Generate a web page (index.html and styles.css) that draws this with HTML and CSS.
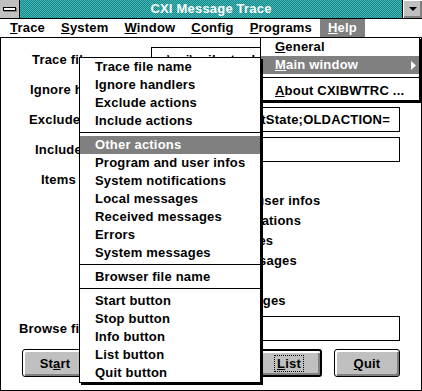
FILE: index.html
```html
<!DOCTYPE html>
<html>
    <head>
        <title>CXI Message Trace</title>
        <link rel="stylesheet" href="styles.css">
    </head>
    <body>
        <div class="window">
            <div class="titlebar">
                <div class="sysbox"><span class="sysbar"></span></div>
                <div class="title">CXI Message Trace</div>
                <div class="minbtn"><span class="arrow"></span></div>
            </div>

            <div class="menubar">
                <span class="menu"><u>T</u>race</span>
                <span class="menu"><u>S</u>ystem</span>
                <span class="menu"><u>W</u>indow</span>
                <span class="menu"><u>C</u>onfig</span>
                <span class="menu"><u>P</u>rograms</span>
                <span class="menu active"><u>H</u>elp</span>
            </div>

            <div class="client">
                <div class="fields">
                    <label class="lbl lbl-trace">Trace file name:</label>
                    <div class="edit">c:\cxi\cxibwtrc.log</div>

                    <label class="lbl lbl-ignore">Ignore handlers:</label>
                    <div class="edit"></div>

                    <label class="lbl lbl-exclude">Exclude actions:</label>
                    <div class="edit">Start;GetMsg;GetState;OLDACTION=</div>

                    <label class="lbl lbl-include">Include actions:</label>
                    <div class="edit"></div>

                    <label class="lbl lbl-items">Items</label>
                    <div class="checks">
                        <div class="check"><span class="box"></span>Other actions</div>
                        <div class="check"><span class="box"></span>Program and user infos</div>
                        <div class="check"><span class="box"></span>System notifications</div>
                        <div class="check"><span class="box"></span>Local messages</div>
                        <div class="check"><span class="box"></span>Received messages</div>
                        <div class="check"><span class="box"></span>Errors</div>
                        <div class="check"><span class="box"></span>System messages</div>
                    </div>

                    <label class="lbl lbl-browse">Browse file name:</label>
                    <div class="edit"></div>
                </div>

                <div class="buttons">
                    <button class="btn">St<u>a</u>rt</button>
                    <button class="btn">St<u>o</u>p</button>
                    <button class="btn"><u>I</u>nfo</button>
                    <button class="btn default"><span class="focus"><u>L</u>ist</span></button>
                    <button class="btn"><u>Q</u>uit</button>
                </div>
            </div>

            <!-- open Help menu -->
            <div class="dropdown help">
                <div class="item"><u>G</u>eneral</div>
                <div class="item sel"><u>M</u>ain window
                    <svg class="more" width="5" height="9" viewBox="0 0 5 9"><polygon points="0,0 5,4.5 0,9" fill="#fff"/></svg>
                </div>
                <div class="sep"></div>
                <div class="item"><u>A</u>bout CXIBWTRC ...</div>
            </div>

            <!-- Main window submenu -->
            <div class="dropdown sub">
                <div class="item">Trace file name</div>
                <div class="item">Ignore handlers</div>
                <div class="item">Exclude actions</div>
                <div class="item">Include actions</div>
                <div class="sep"></div>
                <div class="item sel">Other actions</div>
                <div class="item">Program and user infos</div>
                <div class="item">System notifications</div>
                <div class="item">Local messages</div>
                <div class="item">Received messages</div>
                <div class="item">Errors</div>
                <div class="item">System messages</div>
                <div class="sep"></div>
                <div class="item">Browser file name</div>
                <div class="sep"></div>
                <div class="item">Start button</div>
                <div class="item">Stop button</div>
                <div class="item">Info button</div>
                <div class="item">List button</div>
                <div class="item">Quit button</div>
            </div>
        </div>
    </body>
</html>
```

FILE: styles.css
```css
        body {
            margin: 0;
            background: #fff;
        }
        .window {
            position: relative;
            width: 422px;
            height: 391px;
            overflow: hidden;
            background: #fff;
            color: #000;
            font: bold 13px "Liberation Sans", Arial, sans-serif;
            letter-spacing: .2px;
        }

        /* title bar */
        .titlebar {
            display: flex;
            height: 18px;
            border-bottom: 1px solid #000;
        }
        .sysbox {
            width: 19px;
            border-right: 1px solid #000;
            background: #c0c0c0;
            display: flex;
            align-items: center;
            justify-content: center;
        }
        .sysbar {
            width: 11px;
            height: 2px;
            border: 1px solid #000;
            background: #fff;
            box-shadow: 1px 1px 0 #808080;
        }
        .title {
            flex: 1;
            color: #fff;
            text-align: center;
            line-height: 18px;
            background: repeating-conic-gradient(#0a8a8a 0 25%, #52b5b5 0 50%) 0 0 / 2px 2px;
        }
        .minbtn {
            width: 19px;
            border-left: 1px solid #000;
            background: #c0c0c0;
            box-shadow: inset 1px 1px 0 #fff, inset -2px -2px 0 #808080;
            display: flex;
            align-items: center;
            justify-content: center;
        }
        .arrow {
            border-left: 4px solid transparent;
            border-right: 4px solid transparent;
            border-top: 4px solid #000;
        }

        /* menu bar */
        .menubar {
            display: flex;
            height: 18px;
            padding-left: 2px;
            border-bottom: 1px solid #000;
        }
        .menu {
            padding: 0 8px;
            line-height: 18px;
        }
        .menu.active {
            background: #808080;
            color: #fff;
        }

        /* dialog body */
        .client {
            height: 353px;
            box-sizing: border-box;
            border: 1px solid #000;
            border-top: none;
        }
        .fields {
            display: grid;
            grid-template-columns: 150px 249px;
            row-gap: 5px;
            padding-top: 9px;
        }
        .lbl {
            line-height: 25px;
            white-space: nowrap;
        }
        .lbl-trace { padding-left: 31px; }
        .lbl-ignore { padding-left: 29px; }
        .lbl-exclude { padding-left: 28px; }
        .lbl-include { padding-left: 34px; }
        .lbl-items {
            padding-left: 40px;
            padding-top: 3px;
            line-height: 20px;
        }
        .lbl-browse { padding-left: 18px; }
        .edit {
            height: 25px;
            box-sizing: border-box;
            border: 1px solid #000;
            padding: 0 3px;
            line-height: 23px;
            white-space: nowrap;
            overflow: hidden;
        }
        .checks {
            padding: 3px 0 1px 2px;
        }
        .check {
            display: flex;
            align-items: center;
            gap: 5px;
            height: 20px;
            white-space: nowrap;
        }
        .box {
            width: 12px;
            height: 12px;
            box-sizing: border-box;
            border: 1px solid #000;
        }
        .buttons {
            display: flex;
            gap: 12px;
            padding: 8px 0 0 21px;
        }
        .btn {
            width: 66px;
            height: 28px;
            box-sizing: border-box;
            border: 1px solid #000;
            border-radius: 3px;
            background: #c0c0c0;
            box-shadow: inset 1px 1px 0 #fff, inset 2px 2px 0 #fff, inset -2px -2px 0 #808080;
            font: inherit;
            letter-spacing: inherit;
            color: #000;
            padding: 0;
        }
        .btn.default {
            border-width: 2px;
        }
        .focus {
            outline: 1px dotted #000;
            padding: 0 2px;
        }

        /* menus */
        .dropdown {
            position: absolute;
            box-sizing: border-box;
            border: 1px solid #000;
            box-shadow: 2px 2px 0 #000;
            background: #fff;
        }
        .help {
            left: 260px;
            top: 37px;
            width: 160px;
        }
        .sub {
            left: 79px;
            top: 57px;
            width: 182px;
        }
        .item {
            position: relative;
            height: 18px;
            line-height: 18px;
            padding-left: 15px;
            white-space: nowrap;
        }
        .help .item {
            padding-left: 14px;
        }
        .item.sel {
            background: #808080;
            color: #fff;
        }
        .more {
            position: absolute;
            right: 3px;
            top: 5px;
        }
        .sep {
            border-top: 1px solid #000;
            margin: 2px 0 3px;
        }
        .help .sep {
            margin: 3px 0 4px;
        }
```
